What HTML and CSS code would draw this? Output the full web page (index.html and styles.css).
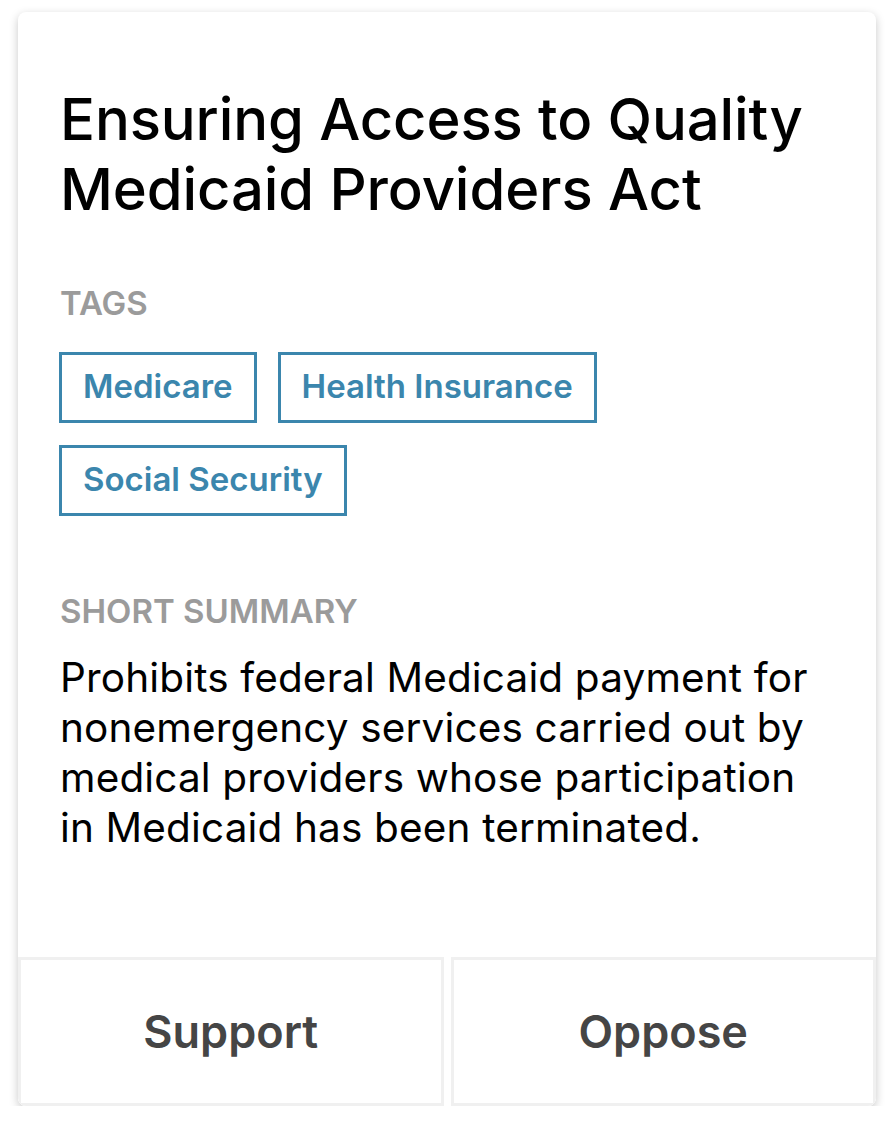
FILE: index.html
```html
<!DOCTYPE html>
<html>
<head>
<meta charset="utf-8">
<link rel="stylesheet" href="styles.css">
</head>
<body>
<div class="card">
  <div class="content">
    <h1 class="title">Ensuring Access to Quality Medicaid Providers Act</h1>
    <div class="label">TAGS</div>
    <div class="tags">
      <span class="tag">Medicare</span>
      <span class="tag">Health Insurance</span>
      <span class="tag">Social Security</span>
    </div>
    <div class="label summary-label">SHORT SUMMARY</div>
    <p class="summary">Prohibits federal Medicaid payment for nonemergency services carried out by medical providers whose participation in Medicaid has been terminated.</p>
  </div>
  <div class="actions">
    <button class="action">Support</button>
    <button class="action">Oppose</button>
  </div>
</div>
</body>
</html>
```
FILE: styles.css
```css
html, body {
  margin: 0;
  padding: 0;
  background: #ffffff;
}
body {
  padding: 12px 18px 0 18px;
  font-family: Inter, "Noto Sans", sans-serif;
}
.card {
  width: 858px;
  height: 1094px;
  box-sizing: border-box;
  background: #fff;
  border-radius: 8px;
  box-shadow: 0 3px 10px rgba(0,0,0,0.22);
  display: flex;
  flex-direction: column;
  overflow: hidden;
}
.content {
  flex: 1;
  padding: 72px 40px 0 42px;
}
.title {
  margin: 0;
  font-size: 58px;
  line-height: 70px;
  font-weight: 500;
  color: #000;
  letter-spacing: -0.1px;
}
.label {
  margin-top: 59px;
  font-size: 33px;
  line-height: 40px;
  font-weight: 600;
  color: #9b9b9b;
}
.tags {
  margin-top: 29px;
  margin-left: -1px;
  display: flex;
  flex-wrap: wrap;
  align-items: flex-start;
  gap: 22px 21px;
}
.tag {
  border: 3px solid #3b86ad;
  color: #3b86ad;
  font-size: 33px;
  font-weight: 600;
  line-height: 40px;
  padding: 11px 21px 14px 21px;
}
.summary-label {
  margin-top: 75px;
}
.summary {
  margin: 22px 0 0 0;
  font-size: 40.5px;
  line-height: 50px;
  color: #000;
  font-weight: 400;
  letter-spacing: 0.15px;
}
.actions {
  display: flex;
  gap: 7px;
}
.action {
  flex: 1;
  height: 149px;
  background: #fff;
  border: 3px solid #f0f0f0;
  font-family: Inter, "Noto Sans", sans-serif;
  font-size: 45px;
  font-weight: 600;
  color: #454545;
  padding: 0;
}
```
